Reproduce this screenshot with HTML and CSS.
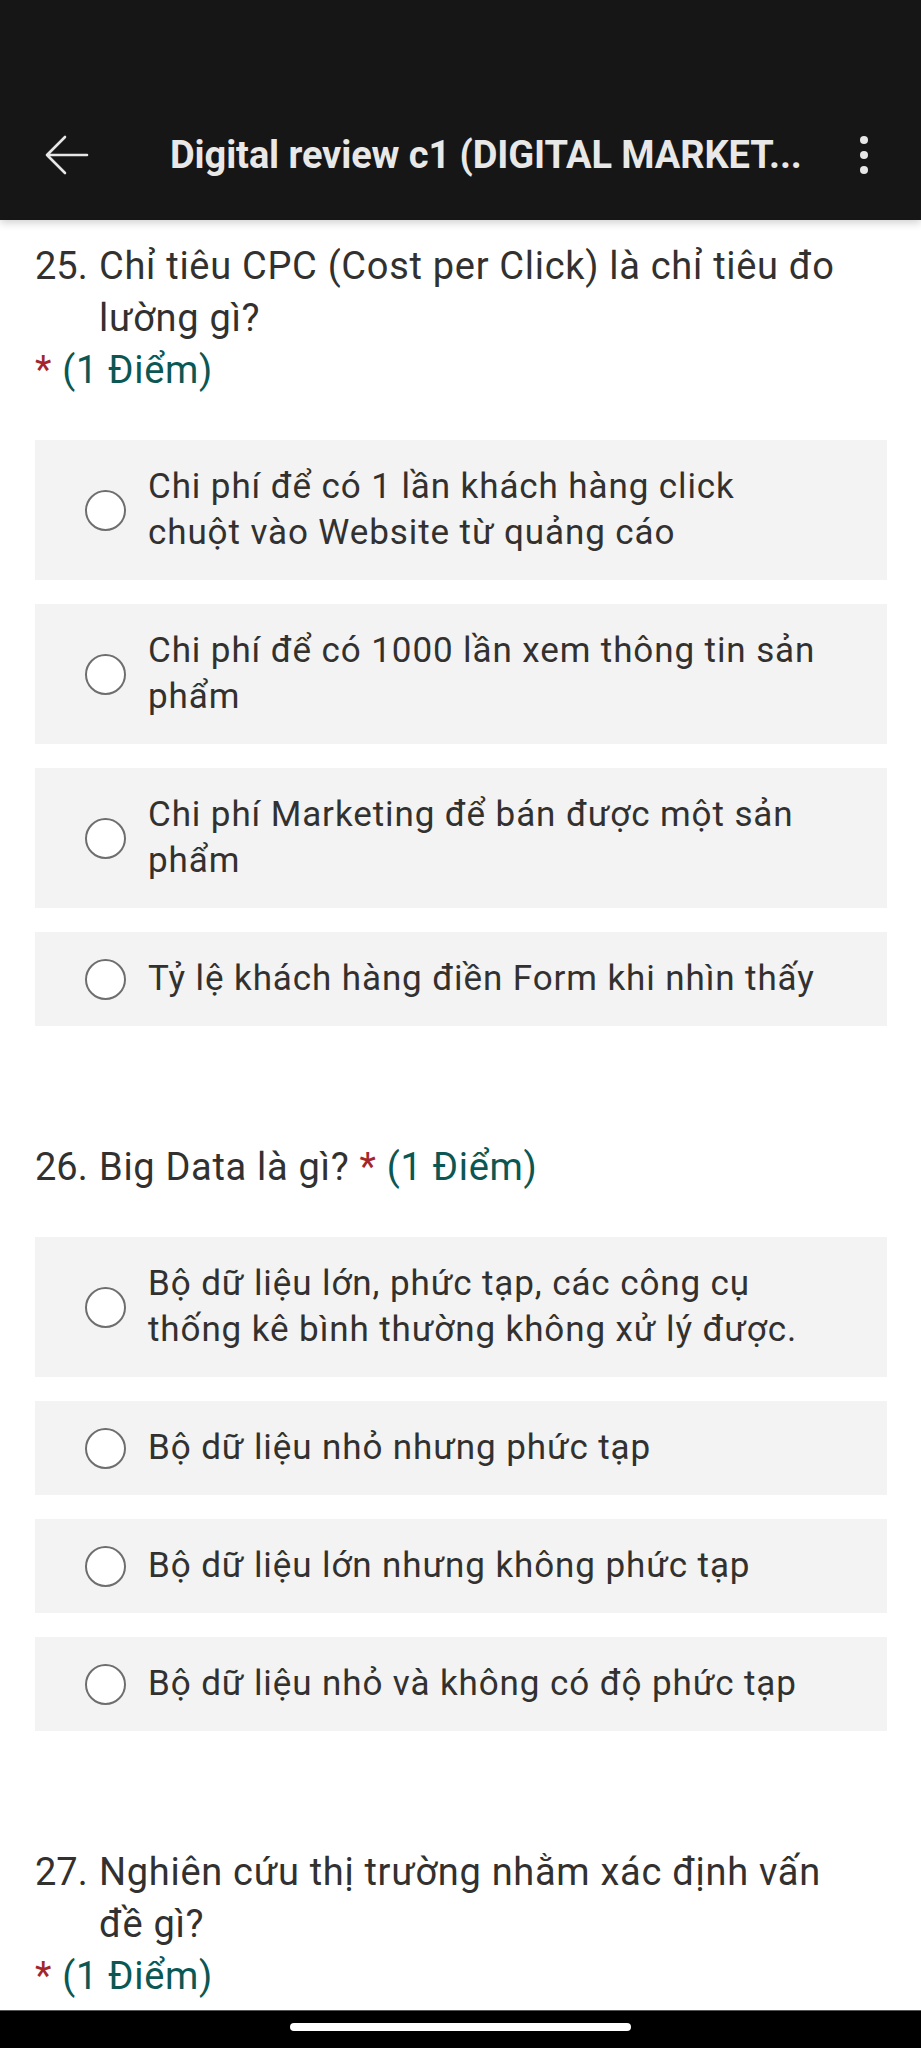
FILE: index.html
```html
<!DOCTYPE html>
<html lang="vi">
<head>
<meta charset="utf-8">
<title>Digital review c1</title>
<link rel="stylesheet" href="styles.css">
</head>
<body>
<div class="app">
  <header class="topbar">
    <div class="statusbar"></div>
    <div class="toolbar">
      <svg class="back" width="46" height="40" viewBox="0 0 46 40" aria-hidden="true">
        <path d="M44 20H4M22 2L4 20L22 38" fill="none" stroke="#e6e6e6" stroke-width="2.6" stroke-linecap="round" stroke-linejoin="round"/>
      </svg>
      <div class="title">Digital review c1 (DIGITAL MARKET...</div>
      <div class="more" aria-hidden="true"><span></span><span></span><span></span></div>
    </div>
  </header>

  <main class="content">
    <section class="question">
      <div class="q-head">
        <span class="q-num">25.</span>
        <span class="q-text">Chỉ tiêu CPC (Cost per Click) là chỉ tiêu đo lường gì?</span>
      </div>
      <div class="q-points"><span class="star">*</span> <span class="pts">(1 Điểm)</span></div>
      <div class="options">
        <label class="option"><span class="radio"></span><span class="opt-text">Chi phí để có 1 lần khách hàng click chuột vào Website từ quảng cáo</span></label>
        <label class="option"><span class="radio"></span><span class="opt-text">Chi phí để có 1000 lần xem thông tin sản phẩm</span></label>
        <label class="option"><span class="radio"></span><span class="opt-text">Chi phí Marketing để bán được một sản phẩm</span></label>
        <label class="option"><span class="radio"></span><span class="opt-text">Tỷ lệ khách hàng điền Form khi nhìn thấy</span></label>
      </div>
    </section>

    <section class="question">
      <div class="q-head">
        <span class="q-num">26.</span>
        <span class="q-text">Big Data là gì? <span class="star">*</span> <span class="pts">(1 Điểm)</span></span>
      </div>
      <div class="options">
        <label class="option"><span class="radio"></span><span class="opt-text">Bộ dữ liệu lớn, phức tạp, các công cụ thống kê bình thường không xử lý được.</span></label>
        <label class="option"><span class="radio"></span><span class="opt-text">Bộ dữ liệu nhỏ nhưng phức tạp</span></label>
        <label class="option"><span class="radio"></span><span class="opt-text">Bộ dữ liệu lớn nhưng không phức tạp</span></label>
        <label class="option"><span class="radio"></span><span class="opt-text">Bộ dữ liệu nhỏ và không có độ phức tạp</span></label>
      </div>
    </section>

    <section class="question">
      <div class="q-head">
        <span class="q-num">27.</span>
        <span class="q-text">Nghiên cứu thị trường nhằm xác định vấn đề gì?</span>
      </div>
      <div class="q-points"><span class="star">*</span> <span class="pts">(1 Điểm)</span></div>
    </section>
  </main>

  <footer class="navbar"><span class="pill"></span></footer>
</div>
</body>
</html>
```

FILE: styles.css
```css
* { box-sizing: border-box; }

html, body {
  margin: 0;
  padding: 0;
  background: #ffffff;
}

body {
  font-family: Roboto, "Noto Sans", "Liberation Sans", sans-serif;
  color: #323130;
  width: 921px;
  height: 2048px;
  overflow: hidden;
}

.app {
  position: relative;
  width: 921px;
  height: 2048px;
  display: flex;
  flex-direction: column;
}

.topbar {
  background: #161616;
  height: 220px;
  flex: none;
  display: flex;
  flex-direction: column;
  box-shadow: 0 3px 8px rgba(0, 0, 0, 0.18);
  position: relative;
  z-index: 1;
}

.statusbar {
  height: 114px;
}

.toolbar {
  height: 82px;
  display: flex;
  align-items: center;
  padding: 0 0 0 43px;
}

.back {
  flex: none;
  display: block;
}

.title {
  margin-left: 81px;
  font-size: 38px;
  font-weight: 700;
  color: #e8e8e8;
  white-space: nowrap;
  letter-spacing: -0.1px;
}

.more {
  margin-left: auto;
  margin-right: 53px;
  display: flex;
  flex-direction: column;
  gap: 7px;
}

.more span {
  width: 8px;
  height: 8px;
  border-radius: 50%;
  background: #e6e6e6;
}

.content {
  flex: 1;
  padding: 20px 34px 0 35px;
  overflow: hidden;
}

.question {
  margin-bottom: 115px;
}

.q-head {
  display: flex;
  font-size: 38px;
  line-height: 52px;
  letter-spacing: 0.7px;
  color: #323130;
}

.q-num {
  flex: none;
  width: 64px;
  letter-spacing: 0;
}

.q-text {
  flex: 1;
  padding-right: 20px;
}

.q-points {
  font-size: 38px;
  line-height: 52px;
  letter-spacing: 0.7px;
}

.star {
  color: #a4262c;
}

.pts {
  color: #0b5753;
}

.options {
  margin-top: 44px;
  display: flex;
  flex-direction: column;
  gap: 24px;
}

.option {
  background: #f3f3f3;
  display: flex;
  align-items: center;
  padding: 24px 60px 24px 50px;
  min-height: 94px;
}

.radio {
  flex: none;
  width: 41px;
  height: 41px;
  border-radius: 50%;
  border: 2px solid #6e6e6e;
  background: #ffffff;
  margin-right: 22px;
}

.opt-text {
  font-size: 35px;
  line-height: 46px;
  letter-spacing: 0.9px;
  color: #323130;
}

.navbar {
  position: absolute;
  left: 0;
  right: 0;
  bottom: 0;
  height: 38px;
  background: #000000;
  border-top: 1px solid #555555;
  display: flex;
  justify-content: center;
  z-index: 2;
}

.pill {
  margin-top: 12px;
  width: 341px;
  height: 8px;
  border-radius: 4px;
  background: #ffffff;
}
```
